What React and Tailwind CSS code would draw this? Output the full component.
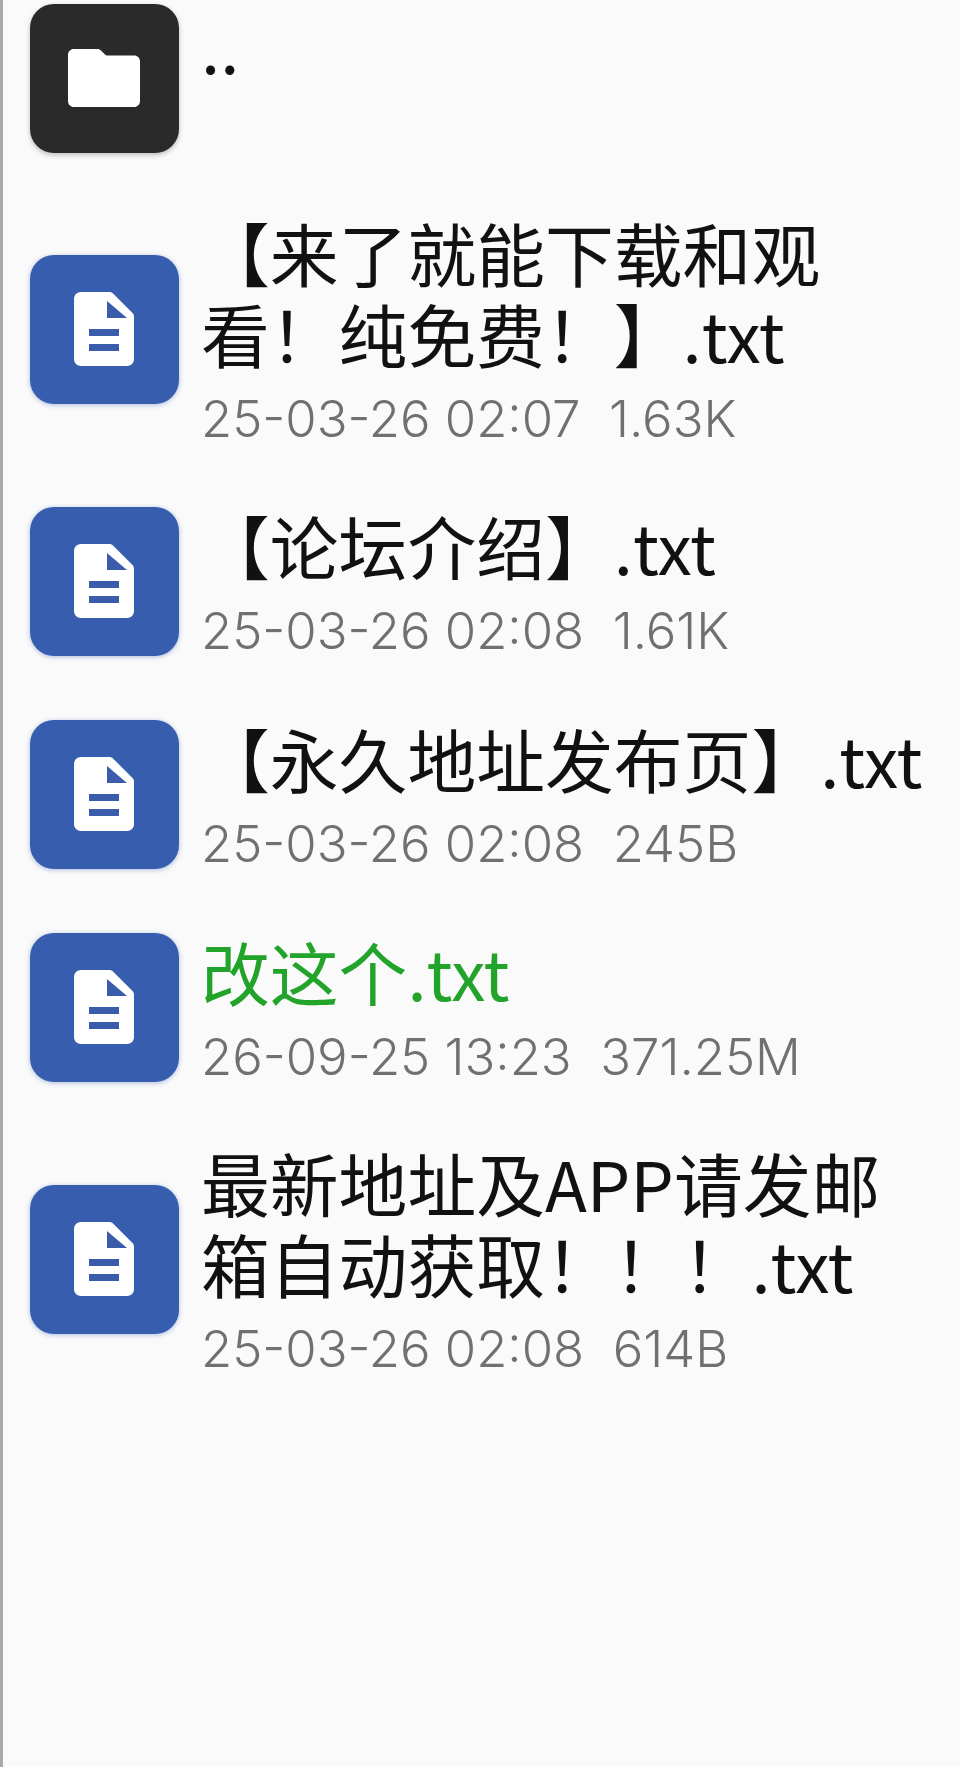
import React from "react";

const files = [
  { name: "【来了就能下载和观看！纯免费！】.txt", date: "25-03-26 02:07", size: "1.63K" },
  { name: "【论坛介绍】.txt", date: "25-03-26 02:08", size: "1.61K" },
  { name: "【永久地址发布页】.txt", date: "25-03-26 02:08", size: "245B" },
  { name: "改这个.txt", date: "26-09-25 13:23", size: "371.25M", green: true },
  { name: "最新地址及APP请发邮箱自动获取！！！.txt", date: "25-03-26 02:08", size: "614B" },
];

const FolderIcon = () => (
  <svg viewBox="0 0 74 60" className="w-[74px] h-[60px]" fill="#ffffff">
    <path d="M7 1h23c2 0 3 .6 4.500 2l3 3c1 1 2 1.500 3.500 1.500h26c3.500 0 6 2.500 6 6V53c0 3.500-2.500 6-6 6H7c-3.500 0-6-2.500-6-6V7c0-3.500 2.500-6 6-6z" />
  </svg>
);

const FileIcon = () => (
  <svg viewBox="0 0 60 74" className="w-[60px] h-[74px]">
    <path d="M7 0h28c2 0 3 .5 4.500 2L58 20.500c1.500 1.500 2 2.500 2 4.500v42c0 4-3 7-7 7H7c-4 0-7-3-7-7V7c0-4 3-7 7-7z" fill="#ffffff" />
    <path d="M33 9l20 17H33z" fill="#3a5cab" />
    <rect x="15" y="37" width="30" height="7" fill="#3a5cab" />
    <rect x="15" y="52" width="30" height="7" fill="#3a5cab" />
  </svg>
);

const Tile = ({ dark, children }) => (
  <div
    className={`w-[149px] h-[149px] shrink-0 rounded-[24px] flex items-center justify-center pr-[2px] pb-[2px] ${
      dark ? "bg-[#2a2a2a] shadow-[0_2px_5px_rgba(0,0,0,0.25)]" : "bg-[#375eae] shadow-[0_1px_5px_rgba(55,94,174,0.4)]"
    }`}
  >
    {children}
  </div>
);

export default function App() {
  return (
    <div className="w-[960px] h-[1767px] bg-[#fafafa] border-l-[3px] border-[#a9a9a9] overflow-hidden font-['Noto_Sans_CJK_SC','Noto_Sans',sans-serif]">
      <div className="flex gap-[22px] pl-[27px] pt-[4px] pb-[31px]">
        <Tile dark>
          <FolderIcon />
        </Tile>
        <div className="text-[68.8px] leading-[81px] text-[#111111]">..</div>
      </div>

      {files.map((file) => (
        <div key={file.name} className="flex items-center gap-[22px] pl-[27px] pr-[25px] py-[24px] min-h-[213px]">
          <Tile>
            <FileIcon />
          </Tile>
          <div className="flex-1 min-w-0 pt-[4px]">
            <div className={`text-[68.8px] leading-[81px] ${file.green ? "text-[#22a32a]" : "text-[#111111]"}`}>{file.name}</div>
            <div className="mt-[12px] font-['Inter','Noto_Sans',sans-serif] font-light text-[50.8px] leading-[65px] text-[#707070] whitespace-pre">
              {file.date}  {file.size}
            </div>
          </div>
        </div>
      ))}
    </div>
  );
}
